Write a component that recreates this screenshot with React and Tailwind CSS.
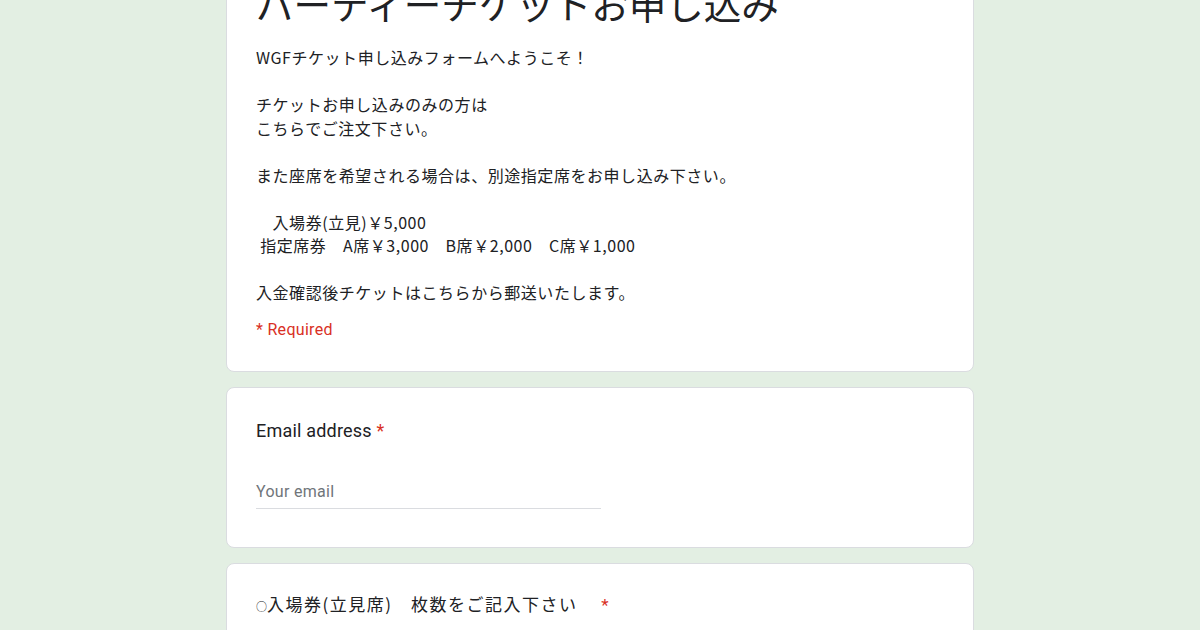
export default function App() {
  const jp = { fontFamily: '"Noto Sans CJK JP", "Noto Sans", sans-serif' }

  return (
    <div className="min-h-[630px] h-[630px] overflow-hidden bg-[#e3efe3]">
      <div className="w-[748px] mx-auto flex flex-col gap-[15px] mt-[-32px]">
        {/* Header card */}
        <div className="bg-white border border-[#dadce0] rounded-[8px] pl-[29px] pr-6 pt-[10px] pb-[31px]">
          <h1 className="text-[37.5px] leading-[48px] text-[#202124]" style={jp}>
            パーティーチケットお申し込み
          </h1>
          <div
            className="mt-[19px] text-[16px] leading-[23.5px] tracking-[0.55px] text-[#202124] whitespace-pre-wrap"
            style={jp}
          >
            {'WGFチケット申し込みフォームへようこそ！\n\nチケットお申し込みのみの方は\nこちらでご注文下さい。\n\nまた座席を希望される場合は、別途指定席をお申し込み下さい。\n\n　入場券(立見)￥5,000\n 指定席券　A席￥3,000　B席￥2,000　C席￥1,000\n\n入金確認後チケットはこちらから郵送いたします。'}
          </div>
          <div className="mt-[15px] text-[16px] leading-[20px] tracking-[0.3px] text-[#d93025] font-['Roboto',sans-serif]">
            * Required
          </div>
        </div>

        {/* Email card */}
        <div className="bg-white border border-[#dadce0] rounded-[8px] pl-[29px] pr-6 pt-[31px] pb-[38px]">
          <div className="text-[18px] leading-[24px] text-[#202124] font-['Roboto',sans-serif] tracking-[0.2px]">
            Email address <span className="text-[#d93025]">*</span>
          </div>
          <div className="mt-[39px] w-[345px] border-b border-[#dadce0] pb-[6px]">
            <div className="text-[16px] leading-[20px] tracking-[0.3px] text-[#70757a] font-['Roboto',sans-serif]">
              Your email
            </div>
          </div>
        </div>

        {/* Ticket count card */}
        <div className="bg-white border border-[#dadce0] rounded-[8px] pl-[29px] pr-6 pt-[28px] pb-[40px]">
          <div className="text-[17px] leading-[24px] text-[#202124] tracking-[1.5px]" style={jp}>
            <span className="text-[11px] tracking-normal">○</span>入場券(立見席)　枚数をご記入下さい　 <span className="text-[#d93025] font-['Roboto',sans-serif]">*</span>
          </div>
        </div>
      </div>
    </div>
  )
}
